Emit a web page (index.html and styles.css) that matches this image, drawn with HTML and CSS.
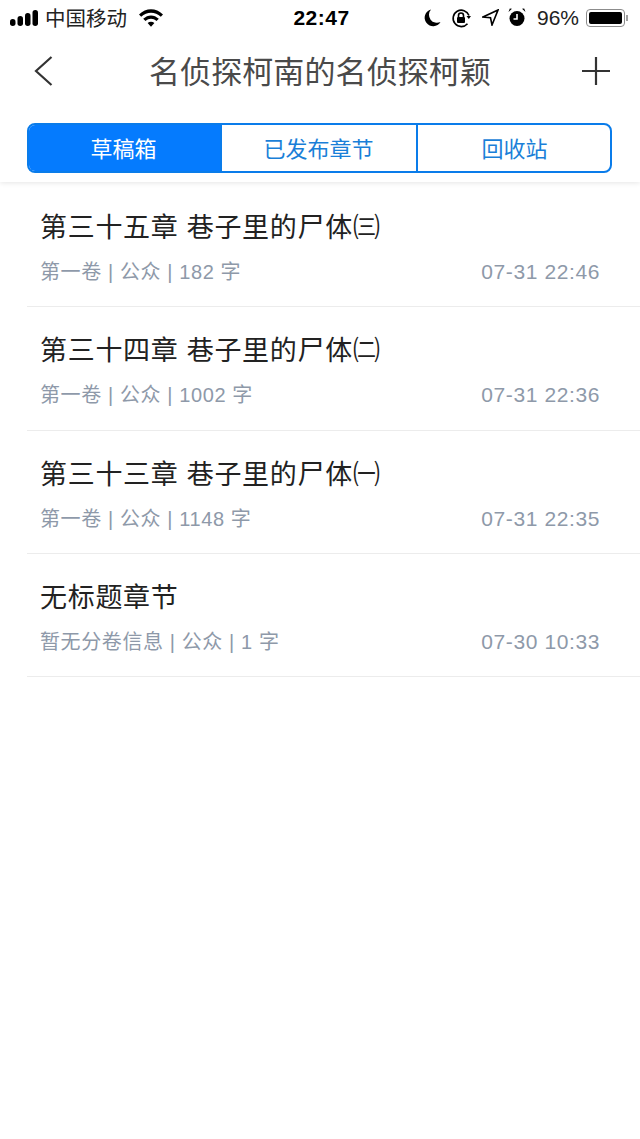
FILE: index.html
```html
<!DOCTYPE html>
<html lang="zh-CN">
<head>
    <meta charset="UTF-8">
    <meta name="viewport" content="width=device-width, initial-scale=1.0">
    <title>名侦探柯南的名侦探柯颖</title>
    <link rel="stylesheet" href="styles.css">
</head>
<body>

    <div class="header">
        <div class="status-bar">
            <div class="status-left">
                <svg class="signal" width="28" height="16" viewBox="0 0 28 16">
                    <rect x="0" y="9" width="5.500" height="7" rx="2.700"/>
                    <rect x="7.500" y="6" width="5.500" height="10" rx="2.700"/>
                    <rect x="15" y="3" width="5.500" height="13" rx="2.700"/>
                    <rect x="22.500" y="0" width="5.500" height="16" rx="2.700"/>
                </svg>
                <span class="carrier">中国移动</span>
                <svg class="wifi" width="24" height="18" viewBox="0 0 24 18">
                    <path d="M0 5.500 C7 -1.500 17 -1.500 24 5.500 L21.800 7.800 C16 2.300 8 2.300 2.200 7.800 Z"/>
                    <path d="M4.200 9.800 C9 5.300 15 5.300 19.800 9.800 L17.500 12.100 C14 9 10 9 6.500 12.100 Z"/>
                    <path d="M8.600 14 C10.700 12.400 13.300 12.400 15.400 14 L12 17.800 Z"/>
                </svg>
            </div>
            <div class="clock">22:47</div>
            <div class="status-right">
                <svg class="status-moon" width="17" height="18" viewBox="0 0 17 18">
                    <path d="M7 0.500 A8.500 8.500 0 1 0 16.500 13 A8 8 0 0 1 7 0.500 Z"/>
                </svg>
                <svg width="20" height="20" viewBox="0 0 20 20">
                    <path class="line" d="M18 7.500 A8.200 8.200 0 1 0 16.500 15.800"/>
                    <path d="M15.500 8 L20 8 L17.800 11 Z"/>
                    <rect x="6" y="9" width="8" height="6" rx="1"/>
                    <path class="line" d="M7.500 9 V7.500 A2.500 2.500 0 0 1 12.500 7.500 V9"/>
                </svg>
                <svg class="status-arrow" width="17" height="17" viewBox="0 0 17 17">
                    <path class="line" d="M16 1 L1 8 L8.500 8.800 L10 16 Z"/>
                </svg>
                <svg width="18" height="19" viewBox="0 0 18 19">
                    <circle cx="9" cy="10.500" r="7.500"/>
                    <path d="M0.500 4 L4 0.800 L1.800 0.500 Z M17.500 4 L14 0.800 L16.200 0.500 Z"/>
                    <path class="line light" d="M9 6 V11 H5.500"/>
                </svg>
                <span class="battery-text">96%</span>
                <div class="battery">
                    <div class="battery-level"></div>
                </div>
                <div class="battery-tip"></div>
            </div>
        </div>

        <div class="nav">
            <svg class="nav-icon" width="22" height="32" viewBox="0 0 22 32">
                <path d="M20.500 2 L5 16 L20.500 30"/>
            </svg>
            <div class="nav-title">名侦探柯南的名侦探柯颖</div>
            <svg class="nav-icon nav-add" width="30" height="30" viewBox="0 0 30 30">
                <path d="M15 1 V29 M1 15 H29"/>
            </svg>
        </div>

        <div class="tabs">
            <div class="tab active">草稿箱</div>
            <div class="tab tab-mid">已发布章节</div>
            <div class="tab tab-last">回收站</div>
        </div>
    </div>

    <div class="list">
        <div class="item">
            <div class="item-title">第三十五章 巷子里的尸体㈢</div>
            <div class="item-info">
                <span>第一卷 | 公众 | 182 字</span>
                <span class="item-time">07-31 22:46</span>
            </div>
        </div>
        <div class="item">
            <div class="item-title">第三十四章 巷子里的尸体㈡</div>
            <div class="item-info">
                <span>第一卷 | 公众 | 1002 字</span>
                <span class="item-time">07-31 22:36</span>
            </div>
        </div>
        <div class="item">
            <div class="item-title">第三十三章 巷子里的尸体㈠</div>
            <div class="item-info">
                <span>第一卷 | 公众 | 1148 字</span>
                <span class="item-time">07-31 22:35</span>
            </div>
        </div>
        <div class="item">
            <div class="item-title">无标题章节</div>
            <div class="item-info">
                <span>暂无分卷信息 | 公众 | 1 字</span>
                <span class="item-time">07-30 10:33</span>
            </div>
        </div>
    </div>

</body>
</html>
```

FILE: styles.css
```css
body {
    margin: 0;
    height: 1139px;
    overflow: hidden;
    font-family: "Liberation Sans", "Noto Sans CJK SC", sans-serif;
    background-color: #ffffff;
    color: #222222;
}

/* Header */
.header {
    height: 182px;
    box-sizing: border-box;
    box-shadow: 0 1px 5px rgba(0, 0, 0, 0.1);
}

.status-bar {
    display: grid;
    grid-template-columns: 1fr auto 1fr;
    align-items: center;
    height: 36px;
    box-sizing: border-box;
    padding: 0 12px 1px 10px;
    color: #000000;
}

.status-bar svg {
    fill: #000000;
}

.status-bar .line {
    fill: none;
    stroke: #000000;
    stroke-width: 1.6;
}

.status-bar .light {
    stroke: #ffffff;
}

.status-left {
    display: flex;
    align-items: center;
}

.carrier {
    margin-left: 7px;
    margin-bottom: 2px;
    font-size: 20.500px;
    color: #222222;
}

.wifi {
    margin-left: 12px;
}

.clock {
    margin-left: 5px;
    font-size: 21px;
    font-weight: bold;
    letter-spacing: 0.5px;
}

.status-right {
    display: flex;
    align-items: center;
    justify-content: flex-end;
    gap: 11px;
}

.status-moon {
    margin-right: -1px;
}

.status-arrow {
    margin-right: -2px;
}

.battery-text {
    font-size: 21px;
    margin-right: -4px;
    color: #222222;
}

.battery {
    width: 39px;
    height: 18px;
    box-sizing: border-box;
    padding: 2px;
    border: 1px solid #8c8c8c;
    border-radius: 4px;
}

.battery-level {
    height: 100%;
    background-color: #000000;
    border-radius: 2px;
}

.battery-tip {
    width: 2px;
    height: 6px;
    margin-left: -10px;
    background-color: #a0a0a0;
}

/* Nav */
.nav {
    display: grid;
    grid-template-columns: 1fr auto 1fr;
    align-items: center;
    height: 70px;
    padding: 0 29px 0 31px;
}

.nav-icon {
    fill: none;
    stroke: #333333;
    stroke-width: 2.200;
}

.nav-add {
    justify-self: end;
}

.nav-title {
    margin-right: 2px;
    padding-bottom: 4px;
    font-size: 31px;
    letter-spacing: 0.100px;
    color: #4a4a4a;
}

/* Tabs */
.tabs {
    display: flex;
    height: 50px;
    margin: 17px 28px 0 27px;
    box-sizing: border-box;
    border: 2px solid #0a7cea;
    border-radius: 8px;
    overflow: hidden;
}

.tab {
    flex: none;
    width: 191px;
    box-sizing: border-box;
    padding-bottom: 3px;
    display: flex;
    align-items: center;
    justify-content: center;
    font-size: 22px;
    color: #1a7fd8;
}

.tab.active {
    padding-right: 2px;
    color: #ffffff;
    background-color: #057bfe;
}

.tab-mid {
    width: 196px;
    padding-right: 1px;
    border-left: 2px solid #0a7cea;
}

.tab-last {
    width: 194px;
    padding-left: 1px;
    border-left: 2px solid #0a7cea;
}

/* Chapter list */
.list {
    padding: 2px 0 0 27px;
}

.item {
    height: 123.300px;
    box-sizing: border-box;
    padding: 26px 40px 0 13px;
    border-bottom: 1px solid #ececec;
}

.item-title {
    font-size: 27px;
    line-height: 36px;
    letter-spacing: 0.700px;
    color: #222222;
}

.item-info {
    display: flex;
    justify-content: space-between;
    margin-top: 13px;
    font-size: 20px;
    line-height: 26px;
    color: #8e99a9;
    letter-spacing: 0.600px;
}

.item-time {
    font-size: 21px;
    letter-spacing: 0.600px;
}
```
